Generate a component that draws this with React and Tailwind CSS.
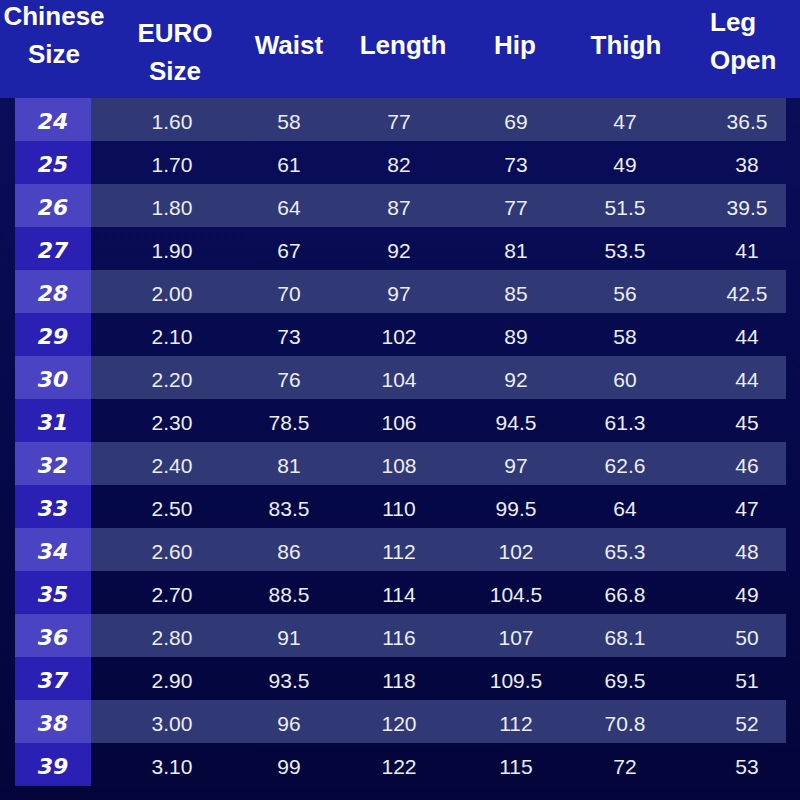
import React from "react";

const rows = [
  ["24", "1.60", "58", "77", "69", "47", "36.5"],
  ["25", "1.70", "61", "82", "73", "49", "38"],
  ["26", "1.80", "64", "87", "77", "51.5", "39.5"],
  ["27", "1.90", "67", "92", "81", "53.5", "41"],
  ["28", "2.00", "70", "97", "85", "56", "42.5"],
  ["29", "2.10", "73", "102", "89", "58", "44"],
  ["30", "2.20", "76", "104", "92", "60", "44"],
  ["31", "2.30", "78.5", "106", "94.5", "61.3", "45"],
  ["32", "2.40", "81", "108", "97", "62.6", "46"],
  ["33", "2.50", "83.5", "110", "99.5", "64", "47"],
  ["34", "2.60", "86", "112", "102", "65.3", "48"],
  ["35", "2.70", "88.5", "114", "104.5", "66.8", "49"],
  ["36", "2.80", "91", "116", "107", "68.1", "50"],
  ["37", "2.90", "93.5", "118", "109.5", "69.5", "51"],
  ["38", "3.00", "96", "120", "112", "70.8", "52"],
  ["39", "3.10", "99", "122", "115", "72", "53"],
];

const SizeRow = ({ row, index }) => {
  const light = index % 2 === 0;
  const [size, ...values] = row;
  return (
    <div className="flex h-[43px]">
      <div
        className={`w-[76px] flex items-center justify-center ${
          light ? "bg-[#4a43c2]" : "bg-[#2a20b4]"
        }`}
      >
        <span className="font-['DejaVu_Sans',sans-serif] font-bold italic text-[22px] text-white pt-[3px]">
          {size}
        </span>
      </div>
      <div
        className={`w-[695px] grid grid-cols-[162px_72px_148px_86px_132px_95px] items-center pt-[4px] ${
          light ? "bg-[#303875]" : ""
        }`}
      >
        {values.map((v, i) => (
          <div
            key={i}
            className={`text-center text-[21px] text-[#eceef6] ${
              i === 5 ? "pl-[17px]" : ""
            }`}
          >
            {v}
          </div>
        ))}
      </div>
    </div>
  );
};

export default function App() {
  return (
    <div className="w-[800px] h-[800px] overflow-hidden bg-gradient-to-b from-[#0b0f5e] to-[#03053a] font-['Liberation_Sans',Arial,sans-serif]">
      {/* header */}
      <div className="h-[98px] bg-[#1c23a8] text-white font-bold text-[26px] leading-[38px] grid grid-cols-[108px_134px_94px_134px_90px_132px_108px] items-start overflow-hidden">
        <div className="text-center -mt-[3px]">
          Chinese
          <br />
          Size
        </div>
        <div className="text-center mt-[14px]">
          EURO
          <br />
          Size
        </div>
        <div className="text-center mt-[26px]">Waist</div>
        <div className="text-center mt-[26px]">Length</div>
        <div className="text-center mt-[26px]">Hip</div>
        <div className="text-center mt-[26px]">Thigh</div>
        <div className="pl-[18px] mt-[3px]">
          Leg
          <br />
          Open
        </div>
      </div>

      {/* rows */}
      <div className="pl-[15px]">
        {rows.map((row, i) => (
          <SizeRow key={row[0]} row={row} index={i} />
        ))}
      </div>
    </div>
  );
}
